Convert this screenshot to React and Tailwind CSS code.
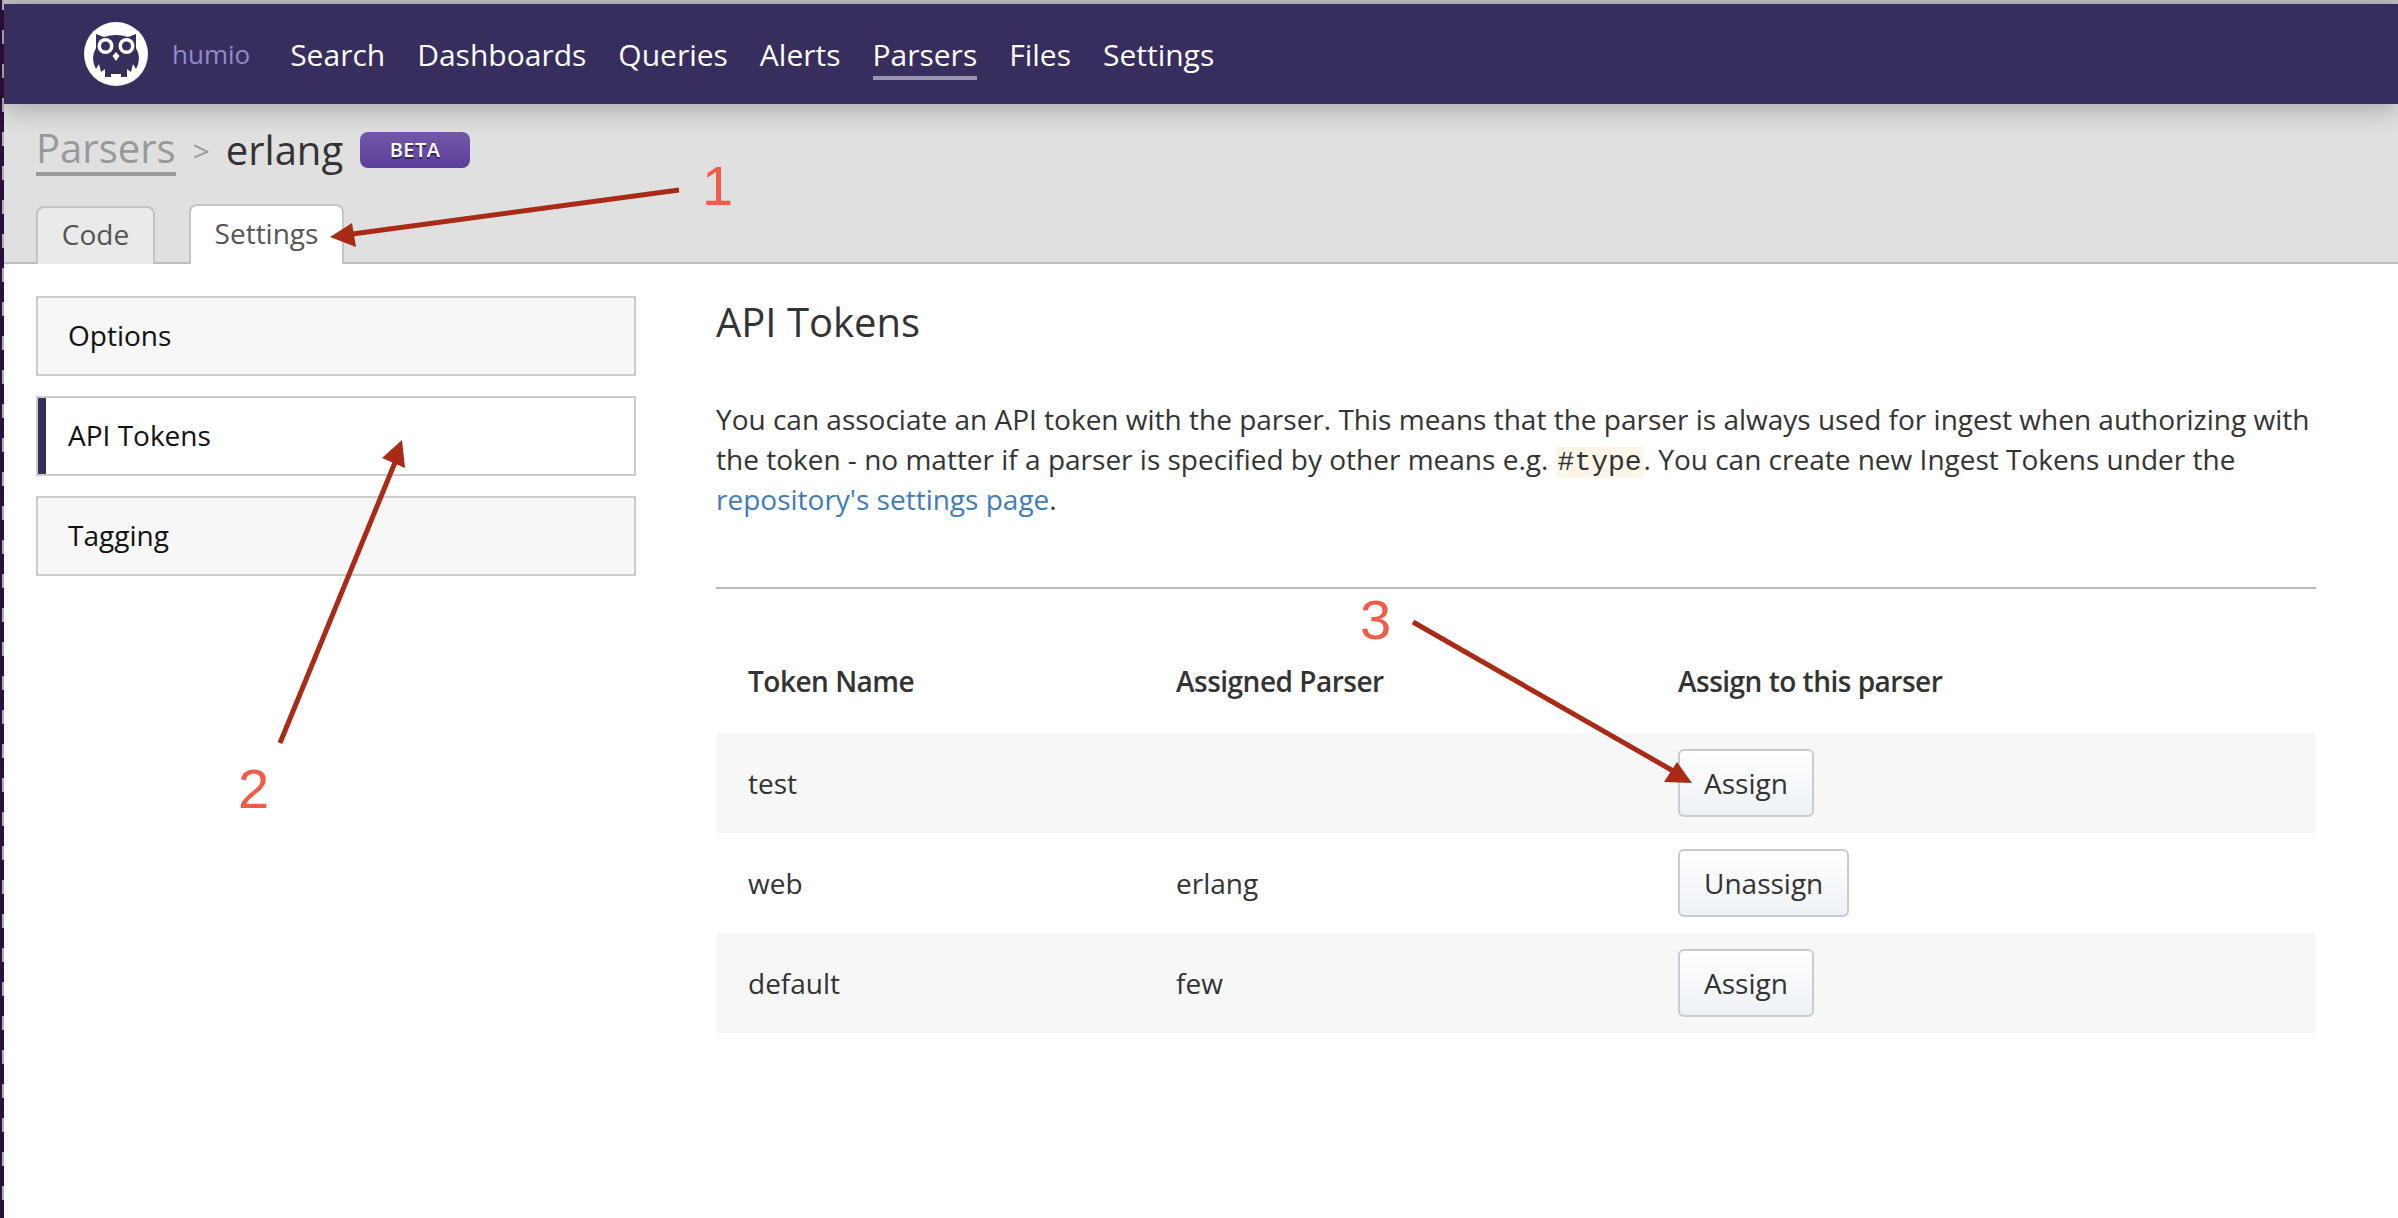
import React from 'react';

const navItems = ['Search', 'Dashboards', 'Queries', 'Alerts', 'Parsers', 'Files', 'Settings'];
const sideItems = ['Options', 'API Tokens', 'Tagging'];
const tokens = [
  { name: 'test', parser: '', action: 'Assign' },
  { name: 'web', parser: 'erlang', action: 'Unassign' },
  { name: 'default', parser: 'few', action: 'Assign' },
];

const OwlLogo = () => (
  <svg width="64" height="64" viewBox="0 0 64 64" className="shrink-0">
    <circle cx="32" cy="32" r="32" fill="#fff" />
    <path
      d="M12 12 L20 15 Q32 11 44 15 L52 12 L52 26 Q58 36 52 47 L49 42 L47 50 L43 47 L43 55 L37 55 L37 52 L27 52 L27 55 L21 55 L21 47 L17 50 L15 42 L12 47 Q6 36 12 26 Z"
      fill="#372e5e"
    />
    <circle cx="21.5" cy="24" r="8" fill="#fff" />
    <circle cx="42.5" cy="24" r="8" fill="#fff" />
    <circle cx="21.5" cy="24" r="4.5" fill="#372e5e" />
    <circle cx="42.5" cy="24" r="4.5" fill="#372e5e" />
    <path d="M32 30 L35.5 34 L32 39 L28.5 34 Z" fill="#fff" />
  </svg>
);

const Annotations = () => (
  <>
    <svg className="absolute left-0 top-0 pointer-events-none" width="2398" height="1218">
      <g stroke="#a92b17" strokeWidth="5" fill="#a92b17">
        <line x1="679" y1="190" x2="345" y2="235" />
        <line x1="280" y1="743" x2="396" y2="460" />
        <line x1="1413" y1="622" x2="1675" y2="772" />
      </g>
      <g fill="#a92b17">
        <polygon points="330,237 352,223 356,247" />
        <polygon points="402,440 382,458 405,468" />
        <polygon points="1692,783 1677,762 1664,782" />
      </g>
    </svg>
    <span className="absolute left-[702px] top-[154px] text-[56px] leading-[64px] text-[#f25a4a] font-['Liberation_Sans',sans-serif]">1</span>
    <span className="absolute left-[238px] top-[757px] text-[56px] leading-[64px] text-[#f25a4a] font-['Liberation_Sans',sans-serif]">2</span>
    <span className="absolute left-[1360px] top-[588px] text-[56px] leading-[64px] text-[#f25a4a] font-['Liberation_Sans',sans-serif]">3</span>
  </>
);

const App = () => {
  return (
    <div className="relative flex w-[2398px] h-[1218px] overflow-hidden bg-white font-['Open_Sans',sans-serif] text-[28px] text-[#333]">
      <div className="w-[4px] shrink-0 bg-[#2d0f3f] flex justify-end">
        <div className="w-[2px] h-full bg-[repeating-linear-gradient(180deg,#b5acb8_0px,#b5acb8_10px,#2d0f3f_10px,#2d0f3f_30px,#b5acb8_30px,#b5acb8_34px)]" />
      </div>
      <div className="flex-1 flex flex-col min-w-0">
        <div className="h-[4px] bg-[#bdbdbd]" />
        <nav className="relative z-10 h-[100px] bg-[#372e5e] flex items-center pl-[80px] shadow-[0_6px_24px_rgba(0,0,0,0.25)]">
          <OwlLogo />
          <span className="ml-[24px] text-[26px] text-[#8f8ccb]">humio</span>
          <div className="flex ml-[40px] gap-[32px] mt-[6px]">
            {navItems.map((item) => (
              <a
                key={item}
                className={`text-[30px] leading-[42px] text-white border-b-4 ${item === 'Parsers' ? 'border-[#9a95b2]' : 'border-transparent'}`}
              >
                {item}
              </a>
            ))}
          </div>
        </nav>

        <header className="h-[160px] bg-[#e0e0e0] border-b-2 border-[#bdbdbd] flex flex-col pl-[32px]">
          <div className="flex items-center h-[80px] pt-[12px]">
            <a className="text-[40px] leading-[48px] text-[#999] border-b-[4px] border-[#999]">Parsers</a>
            <span className="ml-[17px] mr-[16px] text-[30px] text-[#999]">&gt;</span>
            <span className="text-[40px] text-[#333]">erlang</span>
            <span className="ml-[17px] w-[110px] h-[36px] rounded-lg flex items-center justify-center text-[20px] font-semibold tracking-wide text-white bg-gradient-to-b from-[#7358a8] to-[#5c3d9b] [text-shadow:0_2px_1px_rgba(0,0,0,0.5)]">
              BETA
            </span>
          </div>
          <div className="flex gap-[34px] mt-auto -mb-[2px] items-end">
            <div className="w-[119px] h-[58px] pb-[4px] flex items-center justify-center bg-[#eaeaea] border-2 border-b-0 border-[#c4c4c4] rounded-t-lg text-[#555]">
              Code
            </div>
            <div className="w-[155px] h-[60px] pb-[5px] flex items-center justify-center bg-white border-2 border-b-0 border-[#c4c4c4] rounded-t-lg text-[#555]">
              Settings
            </div>
          </div>
        </header>

        <div className="flex-1 flex pl-[32px]">
          <aside className="w-[600px] shrink-0 pt-[32px] flex flex-col gap-[20px]">
            {sideItems.map((item) => (
              <div
                key={item}
                className={`h-[80px] flex items-center border-2 border-[#ccc] text-[#111] ${item === 'API Tokens' ? 'bg-white' : 'bg-[#f7f7f7]'}`}
              >
                {item === 'API Tokens' && <span className="w-[8px] h-full bg-[#372e5e] mr-[22px]" />}
                <span className={`pb-[3px] ${item === 'API Tokens' ? '' : 'ml-[30px]'}`}>{item}</span>
              </div>
            ))}
          </aside>

          <main className="w-[1600px] ml-[80px] pt-[30px]">
            <h2 className="text-[40px] leading-[56px] text-[#333]">API Tokens</h2>
            <p className="mt-[49px] leading-[40px]">
              You can associate an API token with the parser. This means that the parser is always used for ingest when authorizing with
              the token - no matter if a parser is specified by other means e.g.{' '}
              <code className="font-['Liberation_Mono',monospace] bg-[#fbf6e9] px-[2px] leading-none">#type</code>. You can create new Ingest Tokens under the{' '}
              <a className="text-[#3f7cb8]">repository's settings page</a>.
            </p>
            <hr className="mt-[68px] border-t-2 border-[#bbb]" />
            <table className="w-full mt-[46px] table-fixed border-collapse">
              <thead>
                <tr className="h-[98px] text-left tracking-[-0.5px]">
                  <th className="w-[460px] pl-[32px] pb-[6px] font-semibold">Token Name</th>
                  <th className="w-[502px] pb-[6px] font-semibold">Assigned Parser</th>
                  <th className="pb-[6px] font-semibold">Assign to this parser</th>
                </tr>
              </thead>
              <tbody>
                {tokens.map((t, i) => (
                  <tr key={t.name} className={`h-[100px] ${i % 2 === 0 ? 'bg-[#f7f7f7]' : 'bg-white'}`}>
                    <td className="pl-[32px]">{t.name}</td>
                    <td>{t.parser}</td>
                    <td>
                      <button className="h-[68px] px-[24px] border-2 border-[#c8ccd2] rounded-md bg-gradient-to-b from-white to-[#eef2f6] text-[#333]">
                        {t.action}
                      </button>
                    </td>
                  </tr>
                ))}
              </tbody>
            </table>
          </main>
        </div>
      </div>
      <Annotations />
    </div>
  );
};

export default App;
